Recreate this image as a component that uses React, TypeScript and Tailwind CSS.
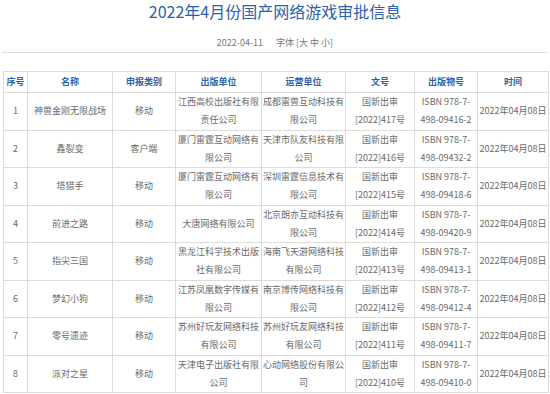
const rows = [
  { no: '1', name: '神兽金刚无限战场', type: '移动', pub: ['江西高校出版社有限', '责任公司'], op: ['成都雷兽互动科技有', '限公司'], doc: '417', isbn: '498-09416-2' },
  { no: '2', name: '鑫裂变', type: '客户端', pub: ['厦门雷霆互动网络有', '限公司'], op: ['天津市队友科技有限', '公司'], doc: '416', isbn: '498-09432-2' },
  { no: '3', name: '塔猎手', type: '移动', pub: ['厦门雷霆互动网络有', '限公司'], op: ['深圳雷霆信息技术有', '限公司'], doc: '415', isbn: '498-09418-6' },
  { no: '4', name: '前进之路', type: '移动', pub: ['大唐网络有限公司'], op: ['北京朗亦互动科技有', '限公司'], doc: '414', isbn: '498-09420-9' },
  { no: '5', name: '指尖三国', type: '移动', pub: ['黑龙江科学技术出版', '社有限公司'], op: ['海南飞天游网络科技', '有限公司'], doc: '413', isbn: '498-09413-1' },
  { no: '6', name: '梦幻小狗', type: '移动', pub: ['江苏凤凰数字传媒有', '限公司'], op: ['南京博传网络科技有', '限公司'], doc: '412', isbn: '498-09412-4' },
  { no: '7', name: '零号遗迹', type: '移动', pub: ['苏州好玩友网络科技', '有限公司'], op: ['苏州好玩友网络科技', '有限公司'], doc: '411', isbn: '498-09411-7' },
  { no: '8', name: '派对之星', type: '移动', pub: ['天津电子出版社有限', '公司'], op: ['心动网络股份有限公', '司'], doc: '410', isbn: '498-09410-0' },
]

const headers = ['序号', '名称', '申报类别', '出版单位', '运营单位', '文号', '出版物号', '时间']
const widths = ['w-[24px]', 'w-[85px]', 'w-[63px]', 'w-[86px]', 'w-[84px]', 'w-[69px]', 'w-[63px]', 'w-[71px]']

function Lines({ lines }: { lines: string[] }) {
  return (
    <>
      {lines.map((l, i) => (
        <span key={i} className="block">{l}</span>
      ))}
    </>
  )
}

export default function App() {
  return (
    <div className="h-[394px] overflow-hidden bg-white px-[2px] font-['Noto_Sans_CJK_SC','Noto_Sans',sans-serif]">
      <h1 className="text-center text-[16px] leading-[22px] font-normal text-[#2c62aa]">
        2022年4月份国产网络游戏审批信息
      </h1>
      <div className="mt-[15px] flex justify-center gap-[13px] text-[9px] leading-[12px] text-[#777]">
        <span>2022-04-11</span>
        <span>字体 [大 中 小]</span>
      </div>
      <div className="mt-[3px] border-t border-[#dedede]" />

      <table className="mt-[18px] ml-px w-[545px] table-fixed border-collapse text-center text-[9px] text-[#6a6a6a]">
        <colgroup>
          {widths.map((w, i) => <col key={i} className={w} />)}
        </colgroup>
        <thead>
          <tr className="h-[21px]">
            {headers.map(h => (
              <th key={h} className="border border-[#dcdcdc] p-0 font-bold text-[#2c62aa] leading-[12px]">{h}</th>
            ))}
          </tr>
        </thead>
        <tbody>
          {rows.map(r => (
            <tr key={r.no} className="h-[37.5px] leading-[18px]">
              <td className="border border-[#dcdcdc] p-0">{r.no}</td>
              <td className="border border-[#dcdcdc] p-0">{r.name}</td>
              <td className="border border-[#dcdcdc] p-0">{r.type}</td>
              <td className="border border-[#dcdcdc] p-0"><Lines lines={r.pub} /></td>
              <td className="border border-[#dcdcdc] p-0"><Lines lines={r.op} /></td>
              <td className="border border-[#dcdcdc] p-0"><Lines lines={['国新出审', `[2022]${r.doc}号`]} /></td>
              <td className="border border-[#dcdcdc] p-0"><Lines lines={['ISBN 978-7-', r.isbn]} /></td>
              <td className="border border-[#dcdcdc] p-0 whitespace-nowrap">2022年04月08日</td>
            </tr>
          ))}
        </tbody>
      </table>
    </div>
  )
}
